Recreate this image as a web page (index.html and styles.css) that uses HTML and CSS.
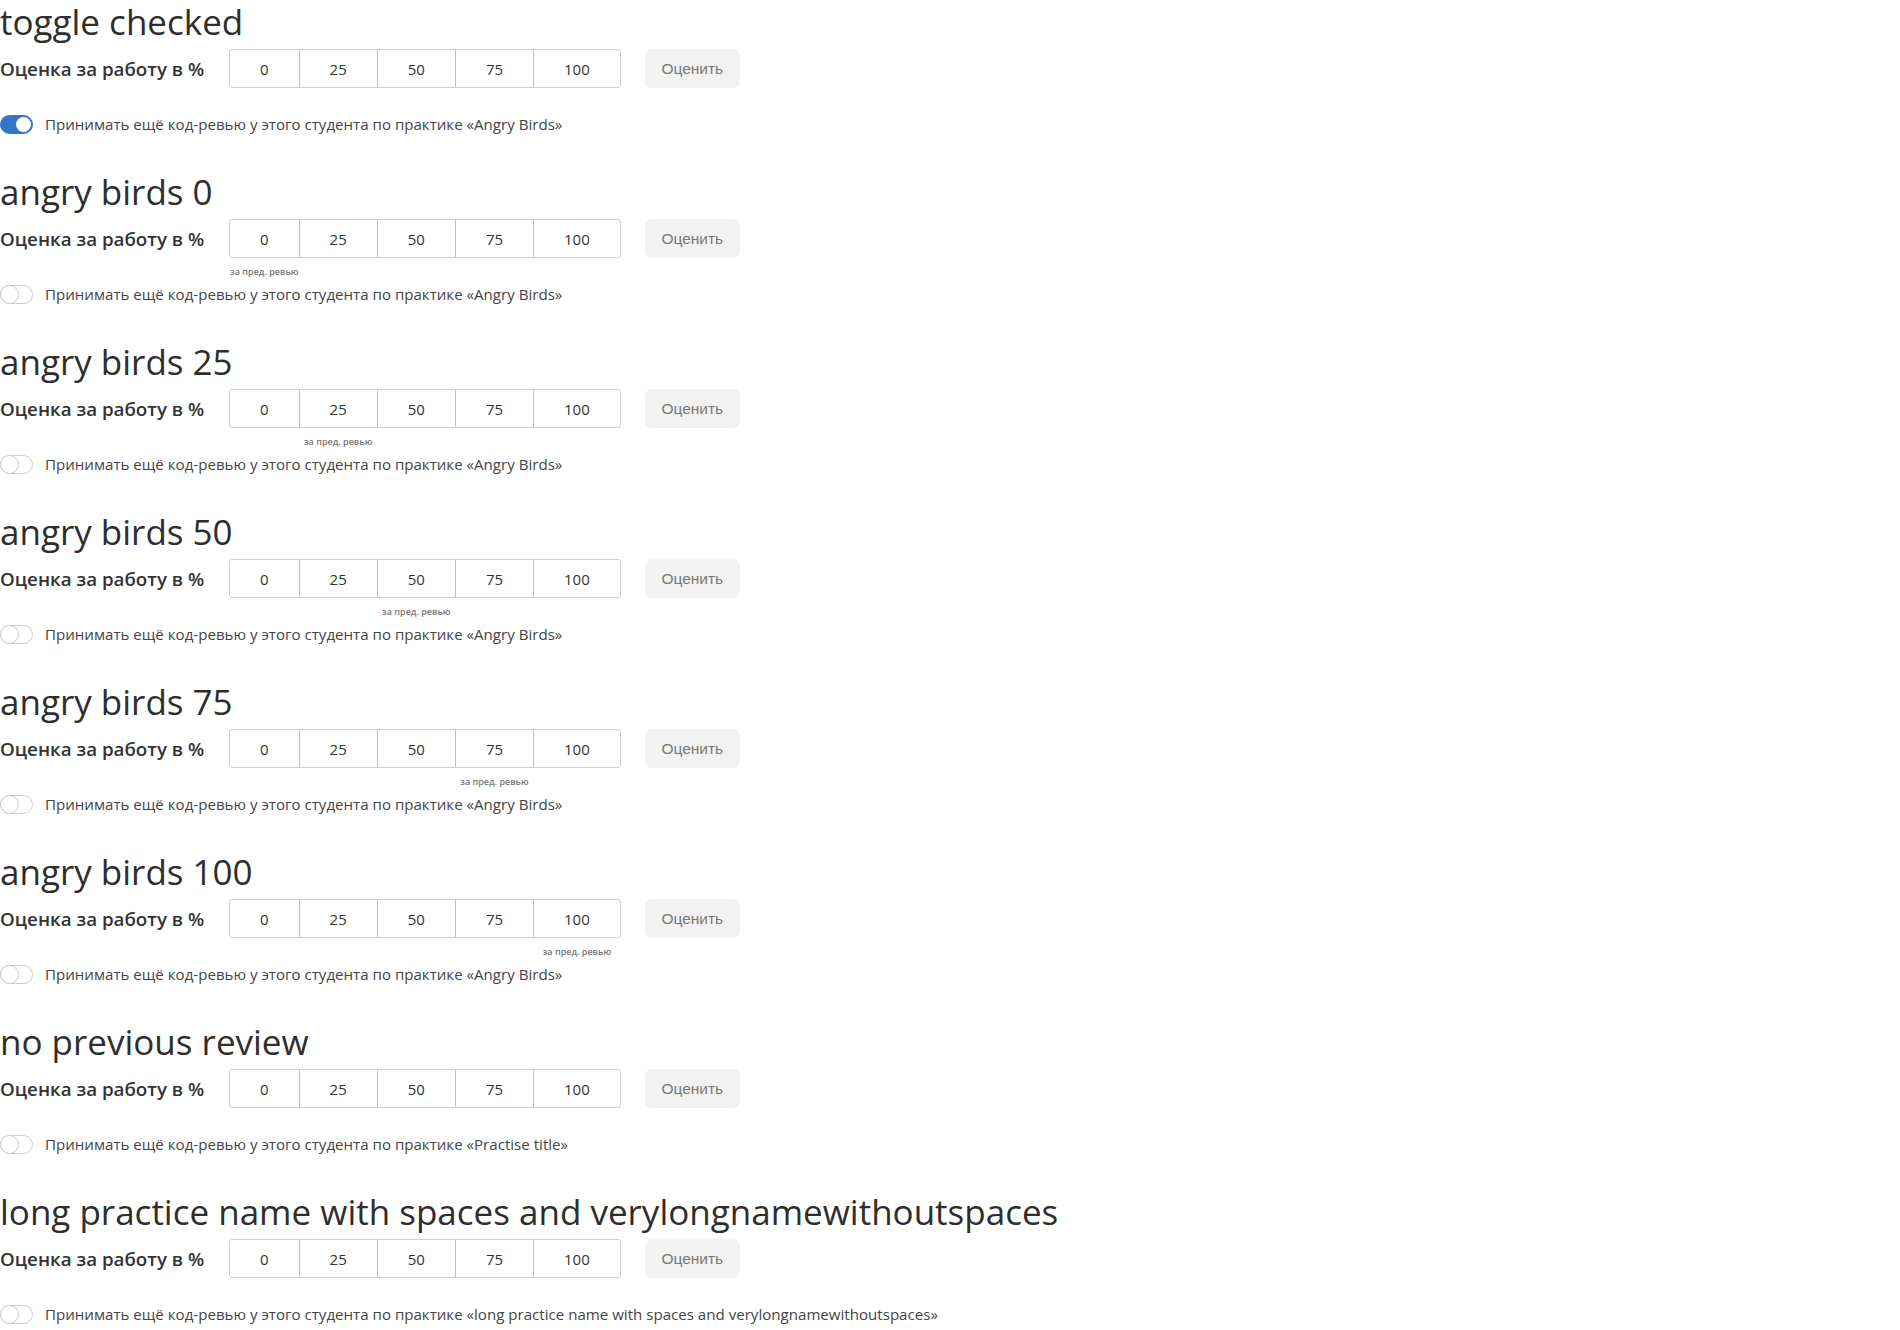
FILE: index.html
```html
<!DOCTYPE html>
<html lang="ru">
<head>
<meta charset="utf-8">
<title>Review</title>
<link rel="stylesheet" href="styles.css">
</head>
<body>

<section class="block">
  <h2 class="title">toggle checked</h2>
  <div class="rate-row">
    <span class="rate-label">Оценка за работу в %</span>
    <div class="seg">
      <span class="cell">0</span><span class="cell">25</span><span class="cell">50</span><span class="cell">75</span><span class="cell">100</span>
    </div>
    <button class="rate-btn">Оценить</button>
  </div>
  <label class="switch-row"><span class="switch on"></span><span class="switch-text">Принимать ещё код-ревью у этого студента по практике «Angry Birds»</span></label>
</section>

<section class="block">
  <h2 class="title">angry birds 0</h2>
  <div class="rate-row">
    <span class="rate-label">Оценка за работу в %</span>
    <div class="seg">
      <span class="cell">0<span class="note">за пред. ревью</span></span><span class="cell">25</span><span class="cell">50</span><span class="cell">75</span><span class="cell">100</span>
    </div>
    <button class="rate-btn">Оценить</button>
  </div>
  <label class="switch-row"><span class="switch"></span><span class="switch-text">Принимать ещё код-ревью у этого студента по практике «Angry Birds»</span></label>
</section>

<section class="block">
  <h2 class="title">angry birds 25</h2>
  <div class="rate-row">
    <span class="rate-label">Оценка за работу в %</span>
    <div class="seg">
      <span class="cell">0</span><span class="cell">25<span class="note">за пред. ревью</span></span><span class="cell">50</span><span class="cell">75</span><span class="cell">100</span>
    </div>
    <button class="rate-btn">Оценить</button>
  </div>
  <label class="switch-row"><span class="switch"></span><span class="switch-text">Принимать ещё код-ревью у этого студента по практике «Angry Birds»</span></label>
</section>

<section class="block">
  <h2 class="title">angry birds 50</h2>
  <div class="rate-row">
    <span class="rate-label">Оценка за работу в %</span>
    <div class="seg">
      <span class="cell">0</span><span class="cell">25</span><span class="cell">50<span class="note">за пред. ревью</span></span><span class="cell">75</span><span class="cell">100</span>
    </div>
    <button class="rate-btn">Оценить</button>
  </div>
  <label class="switch-row"><span class="switch"></span><span class="switch-text">Принимать ещё код-ревью у этого студента по практике «Angry Birds»</span></label>
</section>

<section class="block">
  <h2 class="title">angry birds 75</h2>
  <div class="rate-row">
    <span class="rate-label">Оценка за работу в %</span>
    <div class="seg">
      <span class="cell">0</span><span class="cell">25</span><span class="cell">50</span><span class="cell">75<span class="note">за пред. ревью</span></span><span class="cell">100</span>
    </div>
    <button class="rate-btn">Оценить</button>
  </div>
  <label class="switch-row"><span class="switch"></span><span class="switch-text">Принимать ещё код-ревью у этого студента по практике «Angry Birds»</span></label>
</section>

<section class="block">
  <h2 class="title">angry birds 100</h2>
  <div class="rate-row">
    <span class="rate-label">Оценка за работу в %</span>
    <div class="seg">
      <span class="cell">0</span><span class="cell">25</span><span class="cell">50</span><span class="cell">75</span><span class="cell">100<span class="note">за пред. ревью</span></span>
    </div>
    <button class="rate-btn">Оценить</button>
  </div>
  <label class="switch-row"><span class="switch"></span><span class="switch-text">Принимать ещё код-ревью у этого студента по практике «Angry Birds»</span></label>
</section>

<section class="block">
  <h2 class="title">no previous review</h2>
  <div class="rate-row">
    <span class="rate-label">Оценка за работу в %</span>
    <div class="seg">
      <span class="cell">0</span><span class="cell">25</span><span class="cell">50</span><span class="cell">75</span><span class="cell">100</span>
    </div>
    <button class="rate-btn">Оценить</button>
  </div>
  <label class="switch-row"><span class="switch"></span><span class="switch-text">Принимать ещё код-ревью у этого студента по практике «Practise title»</span></label>
</section>

<section class="block">
  <h2 class="title">long practice name with spaces and verylongnamewithoutspaces</h2>
  <div class="rate-row">
    <span class="rate-label">Оценка за работу в %</span>
    <div class="seg">
      <span class="cell">0</span><span class="cell">25</span><span class="cell">50</span><span class="cell">75</span><span class="cell">100</span>
    </div>
    <button class="rate-btn">Оценить</button>
  </div>
  <label class="switch-row"><span class="switch"></span><span class="switch-text">Принимать ещё код-ревью у этого студента по практике «long practice name with spaces and verylongnamewithoutspaces»</span></label>
</section>

</body>
</html>
```

FILE: styles.css
```css
html, body {
  margin: 0;
  padding: 0;
  background: #ffffff;
}

body {
  font-family: "Open Sans", "Noto Sans", "Liberation Sans", sans-serif;
  color: #333333;
}

.block {
  height: 170px;
  box-sizing: border-box;
}

.title {
  margin: 0;
  font-size: 35px;
  line-height: 44px;
  font-weight: 500;
  color: #2e2e2e;
  white-space: nowrap;
}

.rate-row {
  display: flex;
  align-items: center;
  margin-top: 5px;
  height: 39px;
}

.rate-label {
  font-size: 18.75px;
  font-weight: 600;
  color: #333;
  width: 229px;
  flex: none;
}

.seg {
  display: flex;
  height: 39px;
  border: 1px solid #cfcfcf;
  border-radius: 3px;
  box-sizing: border-box;
}

.cell {
  position: relative;
  display: flex;
  align-items: center;
  justify-content: center;
  padding: 0 30px;
  font-size: 15px;
  color: #333;
  border-left: 1px solid #bfbfbf;
}

.cell:first-child {
  border-left: none;
}

.note {
  position: absolute;
  top: 45px;
  left: 50%;
  transform: translateX(-50%);
  white-space: nowrap;
  font-size: 9px;
  font-weight: 600;
  color: #777;
}

.rate-btn {
  margin-left: 24px;
  width: 95px;
  height: 39px;
  border: none;
  border-radius: 7px;
  background: #f2f2f2;
  color: #777;
  font-family: "Liberation Sans", Arial, sans-serif;
  font-size: 15.5px;
  padding: 0;
}

.switch-row {
  display: flex;
  align-items: center;
  margin-top: 26px;
  height: 20px;
}

.switch {
  position: relative;
  width: 33px;
  height: 19px;
  box-sizing: border-box;
  border: 1px solid #cccccc;
  border-radius: 10px;
  background: #fff;
  flex: none;
}

.switch::after {
  content: "";
  position: absolute;
  left: -1px;
  top: -1px;
  width: 19px;
  height: 19px;
  box-sizing: border-box;
  border: 1px solid #cccccc;
  border-radius: 50%;
  background: #fff;
}

.switch.on {
  background: #3474c9;
  border-color: #3474c9;
}

.switch.on::after {
  left: auto;
  right: 1px;
  top: 1px;
  width: 15px;
  height: 15px;
  border: none;
}

.switch-text {
  margin-left: 12px;
  font-size: 15.1px;
  color: #444;
}
```
